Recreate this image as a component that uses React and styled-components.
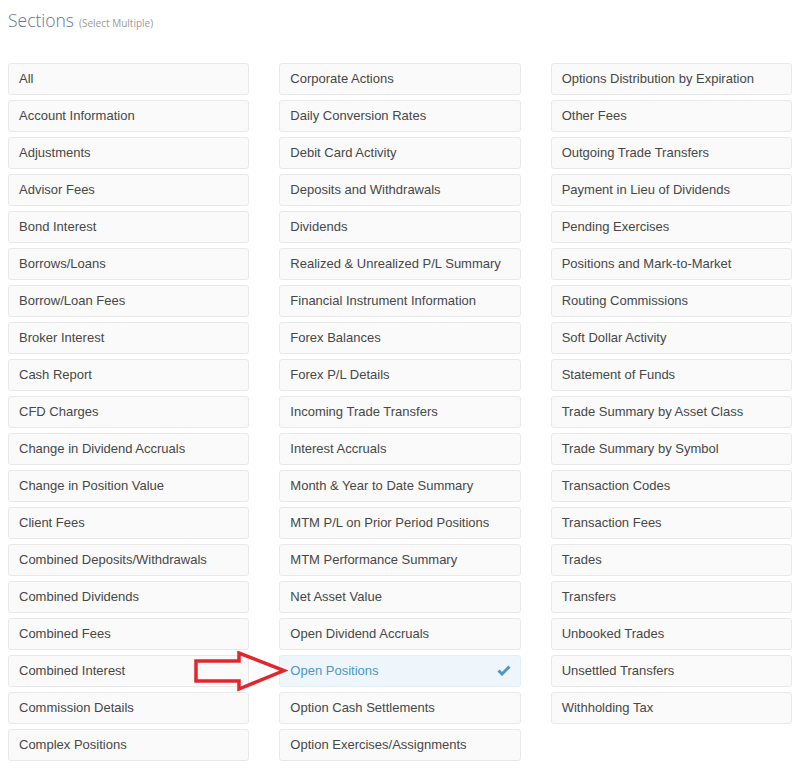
import styled, { createGlobalStyle } from 'styled-components';

const GlobalStyle = createGlobalStyle`
body {
  margin: 0;
  background: #ffffff;
  font-family: "Open Sans", "Liberation Sans", Arial, sans-serif;
}
`

const Page = styled.div`
padding: 8px 4px 8px 8px;
position: relative;
`

const Header = styled.div`
display: flex;
align-items: baseline;
gap: 5px;
height: 55px;
`

const Title = styled.h2`
margin: 0;
font-size: 17.5px;
font-weight: 300;
color: #647592;
`

const Hint = styled.span`
font-size: 10px;
color: #9a9a9a;
`

const Grid = styled.div`
display: grid;
grid-template-columns: repeat(3, 1fr);
column-gap: 30px;
width: 784px;
`

const Column = styled.div`
display: flex;
flex-direction: column;
gap: 5px;
`

const Item = styled.div`
height: 30px;
box-sizing: border-box;
height: 32px;
display: flex;
align-items: center;
justify-content: space-between;
padding: 0 9px 2px 10px;
border: 1px solid ${p => (p.$selected ? '#e3eef7' : '#e8e8e8')};
border-radius: 3px;
background: ${p => (p.$selected ? '#eef6fc' : '#fafafa')};
color: ${p => (p.$selected ? '#4f95c9' : '#474747')};
font-size: 13px;
font-family: "Liberation Sans", Arial, sans-serif;
cursor: pointer;
`

const Arrow = styled.svg`
position: absolute;
left: 194px;
top: 651px;
`

const Check = () => (
  <svg width="14" height="11" viewBox="0 0 14 11">
    <path d="M1.5 5.5 L5 9 L12.5 1.5" fill="none" stroke="#4f95c9" strokeWidth="3" />
  </svg>
)

const columns = [
  [
    'All', 'Account Information', 'Adjustments', 'Advisor Fees', 'Bond Interest',
    'Borrows/Loans', 'Borrow/Loan Fees', 'Broker Interest', 'Cash Report', 'CFD Charges',
    'Change in Dividend Accruals', 'Change in Position Value', 'Client Fees',
    'Combined Deposits/Withdrawals', 'Combined Dividends', 'Combined Fees',
    'Combined Interest', 'Commission Details', 'Complex Positions',
  ],
  [
    'Corporate Actions', 'Daily Conversion Rates', 'Debit Card Activity',
    'Deposits and Withdrawals', 'Dividends', 'Realized & Unrealized P/L Summary',
    'Financial Instrument Information', 'Forex Balances', 'Forex P/L Details',
    'Incoming Trade Transfers', 'Interest Accruals', 'Month & Year to Date Summary',
    'MTM P/L on Prior Period Positions', 'MTM Performance Summary', 'Net Asset Value',
    'Open Dividend Accruals', 'Open Positions', 'Option Cash Settlements',
    'Option Exercises/Assignments',
  ],
  [
    'Options Distribution by Expiration', 'Other Fees', 'Outgoing Trade Transfers',
    'Payment in Lieu of Dividends', 'Pending Exercises', 'Positions and Mark-to-Market',
    'Routing Commissions', 'Soft Dollar Activity', 'Statement of Funds',
    'Trade Summary by Asset Class', 'Trade Summary by Symbol', 'Transaction Codes',
    'Transaction Fees', 'Trades', 'Transfers', 'Unbooked Trades', 'Unsettled Transfers',
    'Withholding Tax',
  ],
]

const selected = ['Open Positions']

const App = () => {
  return (
    <Page>
      <GlobalStyle />
      <Header>
        <Title>Sections</Title>
        <Hint>(Select Multiple)</Hint>
      </Header>
      <Grid>
        {columns.map((col, i) => (
          <Column key={i}>
            {col.map(name => {
              const on = selected.includes(name)
              return (
                <Item key={name} $selected={on}>
                  <span>{name}</span>
                  {on && <Check />}
                </Item>
              )
            })}
          </Column>
        ))}
      </Grid>
      <Arrow width="94" height="42" viewBox="0 0 94 42">
        <path
          d="M2 10 H45 V2 L90 19.5 L45 38 V30 H2 Z"
          fill="none"
          stroke="#e3262b"
          strokeWidth="3.5"
          strokeLinejoin="miter"
        />
      </Arrow>
    </Page>
  )
}

export default App
